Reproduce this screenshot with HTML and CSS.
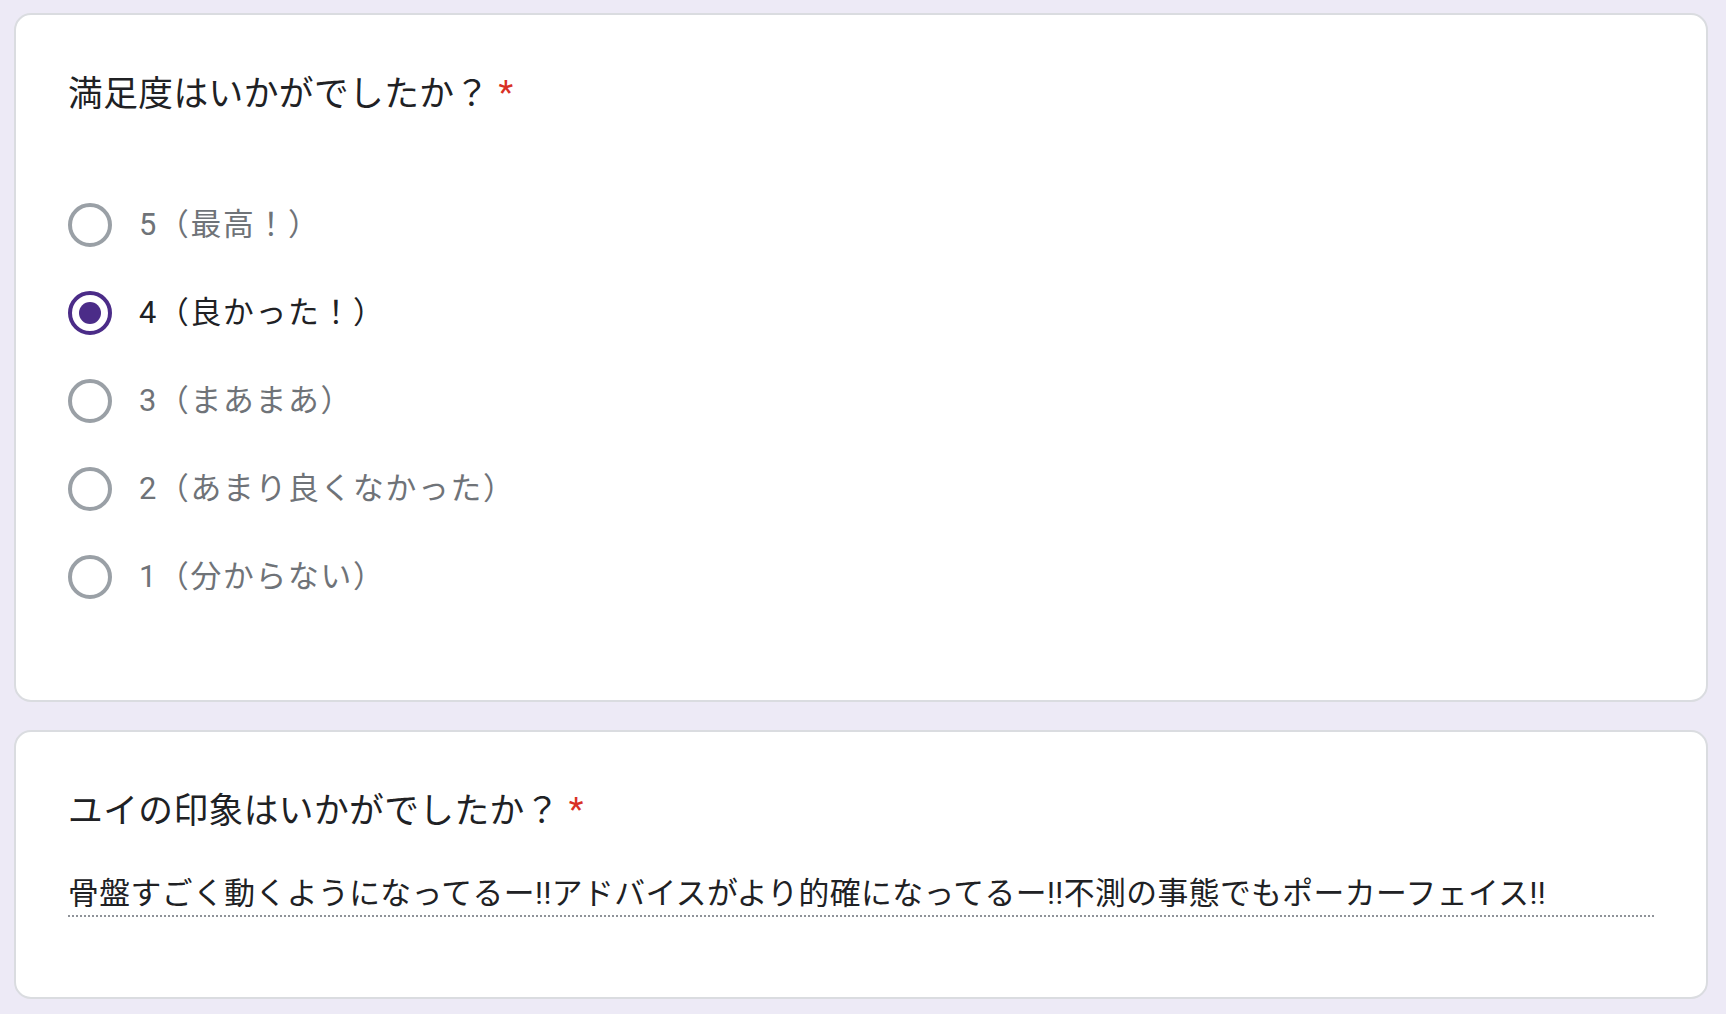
FILE: index.html
```html
<!DOCTYPE html>
<html lang="ja">
<head>
<meta charset="utf-8">
<title>Form</title>
<link rel="stylesheet" href="styles.css">
</head>
<body>
<div class="page">
  <section class="card card-radio">
    <div class="q-title">満足度はいかがでしたか？<span class="req">*</span></div>
    <div class="options">
      <div class="option"><span class="radio"></span><span class="label">5（最高！）</span></div>
      <div class="option selected"><span class="radio"><span class="dot"></span></span><span class="label">4（良かった！）</span></div>
      <div class="option"><span class="radio"></span><span class="label">3（まあまあ）</span></div>
      <div class="option"><span class="radio"></span><span class="label">2（あまり良くなかった）</span></div>
      <div class="option"><span class="radio"></span><span class="label">1（分からない）</span></div>
    </div>
  </section>
  <section class="card card-text">
    <div class="q-title">ユイの印象はいかがでしたか？<span class="req">*</span></div>
    <div class="answer">骨盤すごく動くようになってるー!!アドバイスがより的確になってるー!!不測の事態でもポーカーフェイス!!</div>
  </section>
</div>
</body>
</html>
```

FILE: styles.css
```css
html, body {
  margin: 0;
  padding: 0;
  background: #edeaf6;
}
body {
  font-family: Roboto, "Noto Sans CJK JP", sans-serif;
  color: #202124;
}
.page {
  display: flex;
  flex-direction: column;
  gap: 28px;
  padding: 13px 0 0 14px;
}
.card {
  box-sizing: border-box;
  width: 1694px;
  background: #ffffff;
  border: 2px solid #dadce0;
  border-radius: 17px;
  padding: 54px 52px 0 52px;
}
.card-radio {
  height: 689px;
}
.card-text {
  height: 269px;
}
.q-title {
  font-size: 34.7px;
  line-height: 50px;
  height: 50px;
  color: #202124;
  letter-spacing: 0.44px;
  white-space: nowrap;
}
.card-radio .q-title {
  height: 50px;
  line-height: 50px;
}
.req {
  color: #d93025;
  padding-left: 9px;
  font-size: 34px;
  position: relative;
  top: -2px;
}
.options {
  margin-top: 62px;
  display: flex;
  flex-direction: column;
}
.option {
  height: 88px;
  display: flex;
  align-items: center;
}
.radio {
  box-sizing: border-box;
  width: 44px;
  height: 44px;
  border: 4.4px solid #9aa0a6;
  border-radius: 50%;
  display: flex;
  align-items: center;
  justify-content: center;
  flex: none;
}
.selected .radio {
  border-color: #4b2c88;
}
.dot {
  width: 22px;
  height: 22px;
  border-radius: 50%;
  background: #4b2c88;
}
.label {
  margin-left: 27px;
  font-size: 30.8px;
  line-height: 44px;
  letter-spacing: 1.7px;
  color: #6f7378;
  white-space: nowrap;
}
.selected .label {
  color: #202124;
}
.answer {
  margin-top: 36px;
  font-size: 30.8px;
  line-height: 43px;
  letter-spacing: 0.44px;
  color: #202124;
  border-bottom: 2px dotted #8f9399;
  white-space: nowrap;
}
```
